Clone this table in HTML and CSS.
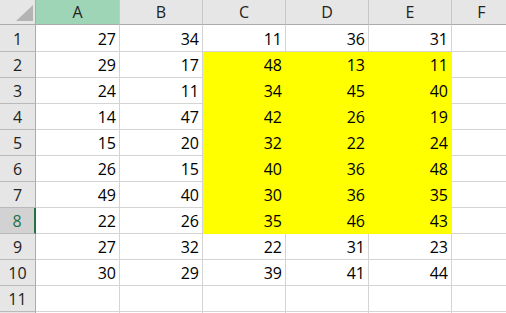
FILE: index.html
```html
<!DOCTYPE html>
<html>
<head>
<meta charset="utf-8">
<link rel="stylesheet" href="styles.css">
</head>
<body>
<div class="sheet" id="sheet">
  <div class="corner"><svg width="36" height="25" viewBox="0 0 36 25"><polygon points="33,5 33,21 16,21" fill="#b4b4b4"/></svg></div>
  <div class="ch sel">A</div><div class="ch">B</div><div class="ch">C</div><div class="ch">D</div><div class="ch">E</div><div class="ch last">F</div>

  <div class="rh">1</div><div class="c">27</div><div class="c">34</div><div class="c">11</div><div class="c">36</div><div class="c">31</div><div class="c"></div>
  <div class="rh">2</div><div class="c">29</div><div class="c">17</div><div class="c y">48</div><div class="c y">13</div><div class="c y">11</div><div class="c"></div>
  <div class="rh">3</div><div class="c">24</div><div class="c">11</div><div class="c y">34</div><div class="c y">45</div><div class="c y">40</div><div class="c"></div>
  <div class="rh">4</div><div class="c">14</div><div class="c">47</div><div class="c y">42</div><div class="c y">26</div><div class="c y">19</div><div class="c"></div>
  <div class="rh">5</div><div class="c">15</div><div class="c">20</div><div class="c y">32</div><div class="c y">22</div><div class="c y">24</div><div class="c"></div>
  <div class="rh">6</div><div class="c">26</div><div class="c">15</div><div class="c y">40</div><div class="c y">36</div><div class="c y">48</div><div class="c"></div>
  <div class="rh">7</div><div class="c">49</div><div class="c">40</div><div class="c y">30</div><div class="c y">36</div><div class="c y">35</div><div class="c"></div>
  <div class="rh rsel">8</div><div class="c">22</div><div class="c">26</div><div class="c y">35</div><div class="c y">46</div><div class="c y">43</div><div class="c"></div>
  <div class="rh">9</div><div class="c">27</div><div class="c">32</div><div class="c">22</div><div class="c">31</div><div class="c">23</div><div class="c"></div>
  <div class="rh">10</div><div class="c">30</div><div class="c">29</div><div class="c">39</div><div class="c">41</div><div class="c">44</div><div class="c"></div>
  <div class="rh">11</div><div class="c"></div><div class="c"></div><div class="c"></div><div class="c"></div><div class="c"></div><div class="c"></div>
  <div class="rh"></div><div class="c"></div><div class="c"></div><div class="c"></div><div class="c"></div><div class="c"></div><div class="c"></div>
</div>
</body>
</html>
```
FILE: styles.css
```css
html, body {
  margin: 0;
  padding: 0;
  background: #ffffff;
  overflow: hidden;
}
.sheet {
  display: grid;
  grid-template-columns: 36px 84px 83px 83px 83px 83px 60px;
  grid-template-rows: 25px 27px repeat(11, 26px);
  font-family: "Open Sans", "Liberation Sans", sans-serif;
  font-size: 16px;
  color: #000;
  width: 506px;
  height: 313px;
  overflow: hidden;
}
.corner {
  background: #e6e6e6;
  border-right: 1px solid #ababab;
  border-bottom: 1px solid #ababab;
  box-sizing: border-box;
}
.corner svg { display: block; }
.ch {
  background: #e6e6e6;
  border-right: 1px solid #c6c6c6;
  border-bottom: 1px solid #ababab;
  box-sizing: border-box;
  display: flex;
  align-items: center;
  justify-content: center;
  color: #222;
  padding-bottom: 1px;
}
.ch.sel {
  background: #9fd5b7;
}
.rh {
  background: #e6e6e6;
  border-right: 1px solid #ababab;
  border-bottom: 1px solid #b9b9b9;
  box-sizing: border-box;
  display: flex;
  align-items: center;
  justify-content: center;
  color: #222;
  padding-top: 1px;
}
.rh.rsel {
  background: #d2d2d2;
  color: #1e7145;
  border-right: 2px solid #217346;
}
.c {
  border-right: 1px solid #d4d4d4;
  border-bottom: 1px solid #d4d4d4;
  box-sizing: border-box;
  display: flex;
  align-items: center;
  justify-content: flex-end;
  padding-right: 3px;
  padding-top: 1px;
}
.c.y {
  background: #ffff00;
  border-color: #ffff00;
}
```
